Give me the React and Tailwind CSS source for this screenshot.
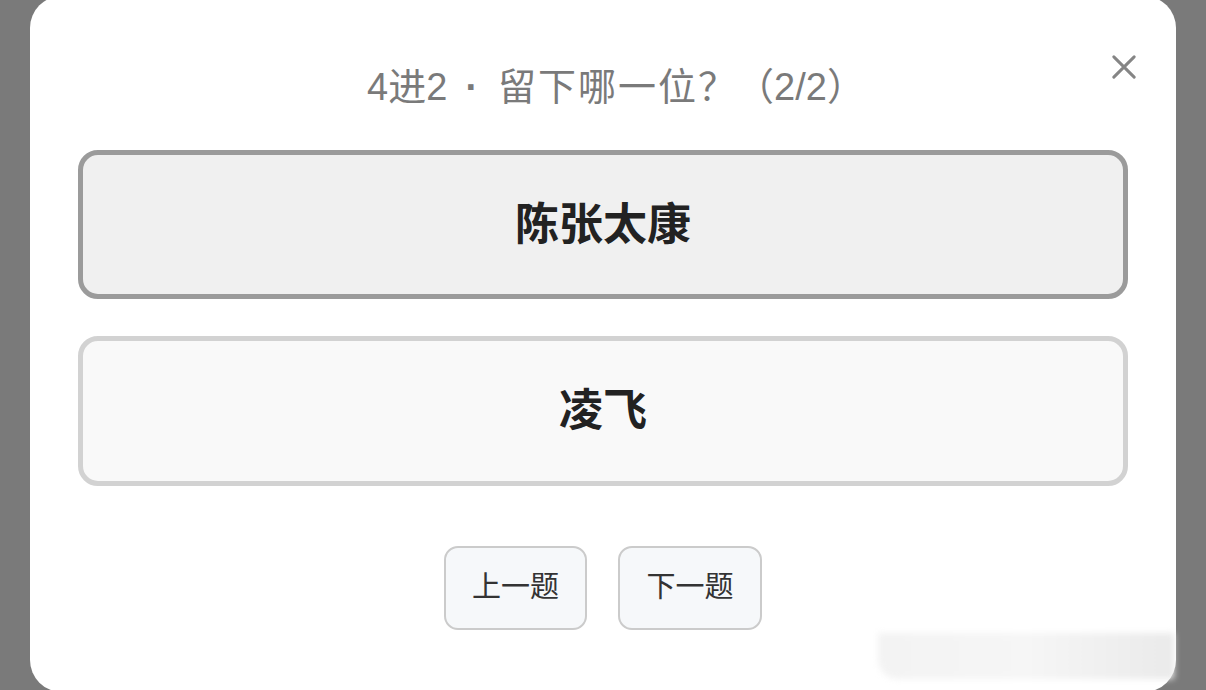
import React from "react";

export default function App() {
  const font = { fontFamily: '"Liberation Sans","Noto Sans CJK SC",sans-serif' };
  return (
    <div className="w-[1206px] h-[690px] bg-[#7a7a7a] overflow-hidden px-[30px]" style={font}>
      <div className="relative mt-[-4px] h-[696px] bg-white rounded-[32px] px-[48px] pt-[70px] flex flex-col">
        <button className="absolute right-[40px] top-[59px] w-[24px] h-[24px] flex items-center justify-center">
          <svg width="26" height="26" viewBox="0 0 26 26" fill="none">
            <path d="M2 2 L24 24 M24 2 L2 24" stroke="#858585" strokeWidth="3.2" strokeLinecap="round" />
          </svg>
        </button>
        <div className="pl-[26px] text-center text-[38px] leading-[42px] text-[#7a7a7a] whitespace-nowrap">
          <span>4进2</span>
          <span className="ml-[18px] mr-[20px] font-bold">·</span>
          <span className="tracking-[2px]">留下哪一位</span>
          <span>？（2/2）</span>
        </div>
        <div className="mt-[42px] h-[149px] shrink-0 rounded-[20px] border-[5px] border-[#9b9b9b] bg-[#f0f0f0] flex items-center justify-center">
          <span className="text-[44px] font-bold text-[#222] leading-none">陈张太康</span>
        </div>
        <div className="mt-[37px] h-[150px] shrink-0 rounded-[20px] border-[5px] border-[#d2d2d2] bg-[#f9f9f9] flex items-center justify-center">
          <span className="text-[44px] font-bold text-[#222] leading-none">凌飞</span>
        </div>
        <div className="mt-[60px] flex justify-center gap-[31px]">
          <button className="w-[143px] h-[84px] rounded-[14px] border-2 border-[#cbcbcb] bg-[#f6f8fa] text-[29px] text-[#333] flex items-center justify-center">
            上一题
          </button>
          <button className="w-[144px] h-[84px] rounded-[14px] border-2 border-[#cbcbcb] bg-[#f6f8fa] text-[29px] text-[#333] flex items-center justify-center">
            下一题
          </button>
        </div>
        <div className="absolute left-[848px] top-[637px] w-[296px] h-[46px] bg-gradient-to-r from-[#f3f3f3] via-[#f6f6f6] to-[#eaeaea] blur-[3px] rounded-bl-[20px]" />
      </div>
    </div>
  );
}
